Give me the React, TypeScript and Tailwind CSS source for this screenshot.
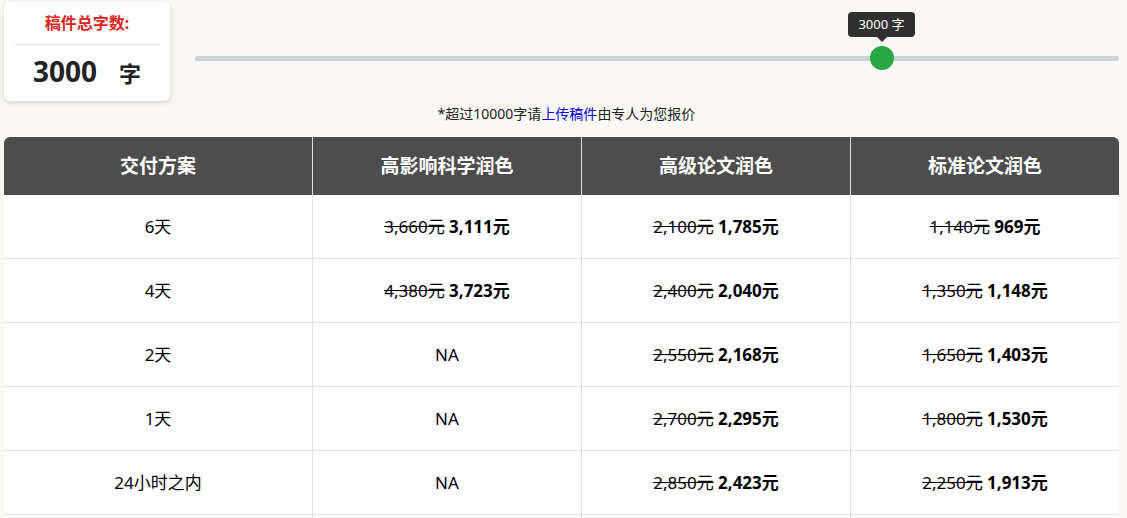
export default function App() {
  const rows = [
    ["6天", ["3,660元", "3,111元"], ["2,100元", "1,785元"], ["1,140元", "969元"]],
    ["4天", ["4,380元", "3,723元"], ["2,400元", "2,040元"], ["1,350元", "1,148元"]],
    ["2天", null, ["2,550元", "2,168元"], ["1,650元", "1,403元"]],
    ["1天", null, ["2,700元", "2,295元"], ["1,800元", "1,530元"]],
    ["24小时之内", null, ["2,850元", "2,423元"], ["2,250元", "1,913元"]],
    ["", null, null, null],
  ] as const;
  const price = (p: readonly [string, string] | null) =>
    p ? (
      <span>
        <span className="line-through">{p[0]}</span> <b className="font-bold">{p[1]}</b>
      </span>
    ) : (
      "NA"
    );
  return (
    <div className="w-[1127px] h-[518px] overflow-hidden bg-[#f9f8f4] text-[#222]" style={{ fontFamily: '"Noto Sans", "Noto Sans CJK SC", sans-serif' }}>
      <div className="flex items-start">
        <div className="ml-[4px] mt-[2px] w-[166px] h-[99px] bg-white rounded-md shadow-[0_2px_5px_rgba(0,0,0,0.15)] px-[10px] flex flex-col items-center">
          <div className="text-[#d9251d] font-bold text-[16px] leading-[20px] mt-[11px]">稿件总字数:</div>
          <div className="w-full border-t border-[#e5e5e5] mt-[11px]" />
          <div className="flex items-baseline gap-[22px] mt-[6px] font-bold">
            <span className="text-[28px] leading-[40px]">3000</span>
            <span className="text-[22px]">字</span>
          </div>
        </div>
        <div className="relative flex-1 ml-[25px] mr-[8px] mt-[56px] h-[5px] bg-[#cfd1d8] rounded-full">
          <div className="absolute left-[675px] top-[-10px] w-[24px] h-[24px] rounded-full bg-[#27a844]" />
          <div className="absolute left-[653px] top-[-44px] w-[67px] h-[25px] bg-[#2f2f2f] rounded text-white text-[13px] flex items-center justify-center">
            3000 字
            <div className="absolute bottom-[-5px] left-1/2 -translate-x-1/2 w-0 h-0 border-l-[5px] border-r-[5px] border-t-[5px] border-l-transparent border-r-transparent border-t-[#2f2f2f]" />
          </div>
        </div>
      </div>
      <div className="text-center text-[14px] leading-[20px] mt-[3px] ml-[6px]">
        *超过10000字请<span className="text-[#0000ee]">上传稿件</span>由专人为您报价
      </div>
      <div className="mx-[4px] mt-[13px] w-[1115px] rounded-t-md overflow-hidden bg-white">
        <div className="grid grid-cols-[308px_269px_269px_269px] bg-[#4d4d4d] text-white font-bold text-[19px] h-[58px]">
          {["交付方案", "高影响科学润色", "高级论文润色", "标准论文润色"].map((h, i) => (
            <div key={h} className={`flex items-center justify-center ${i ? "border-l border-[#ddd]" : ""}`}>{h}</div>
          ))}
        </div>
        {rows.map((r, i) => (
          <div key={i} className="grid grid-cols-[308px_269px_269px_269px] h-[64px] border-b border-[#e3e3e3] text-[17px] text-black">
            <div className="flex items-center justify-center">{r[0]}</div>
            <div className="flex items-center justify-center border-l border-[#e3e3e3]">{r[0] ? price(r[1]) : ""}</div>
            <div className="flex items-center justify-center border-l border-[#e3e3e3]">{r[0] ? price(r[2]) : ""}</div>
            <div className="flex items-center justify-center border-l border-[#e3e3e3]">{r[0] ? price(r[3]) : ""}</div>
          </div>
        ))}
      </div>
    </div>
  );
}
